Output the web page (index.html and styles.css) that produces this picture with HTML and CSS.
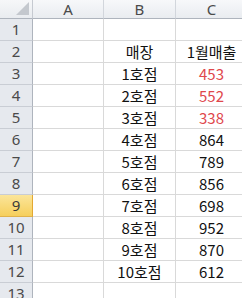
FILE: index.html
```html
<!DOCTYPE html>
<html>
<head>
<meta charset="utf-8">
<link rel="stylesheet" href="styles.css">
</head>
<body>
<div class="sheet">
  <div class="corner"><span class="tri"></span></div>
  <div class="colhead">A</div>
  <div class="colhead">B</div>
  <div class="colhead">C</div>

  <div class="rowhead">1</div><div class="cell"></div><div class="cell"></div><div class="cell"></div>
  <div class="rowhead">2</div><div class="cell"></div><div class="cell">매장</div><div class="cell">1월매출</div>
  <div class="rowhead">3</div><div class="cell"></div><div class="cell">1호점</div><div class="cell red">453</div>
  <div class="rowhead">4</div><div class="cell"></div><div class="cell">2호점</div><div class="cell red">552</div>
  <div class="rowhead">5</div><div class="cell"></div><div class="cell">3호점</div><div class="cell red">338</div>
  <div class="rowhead">6</div><div class="cell"></div><div class="cell">4호점</div><div class="cell">864</div>
  <div class="rowhead">7</div><div class="cell"></div><div class="cell">5호점</div><div class="cell">789</div>
  <div class="rowhead">8</div><div class="cell"></div><div class="cell">6호점</div><div class="cell">856</div>
  <div class="rowhead sel">9</div><div class="cell"></div><div class="cell">7호점</div><div class="cell">698</div>
  <div class="rowhead">10</div><div class="cell"></div><div class="cell">8호점</div><div class="cell">952</div>
  <div class="rowhead">11</div><div class="cell"></div><div class="cell">9호점</div><div class="cell">870</div>
  <div class="rowhead">12</div><div class="cell"></div><div class="cell">10호점</div><div class="cell">612</div>
  <div class="rowhead">13</div><div class="cell"></div><div class="cell"></div><div class="cell"></div>
</div>
</body>
</html>
```
FILE: styles.css
```css
html, body {
  margin: 0;
  padding: 0;
  background: #ffffff;
  overflow: hidden;
}
.sheet {
  display: grid;
  grid-template-columns: 33px 71px 72px 72px;
  grid-template-rows: 19px repeat(13, 22px);
  font-family: "Noto Sans CJK KR", "Noto Sans", sans-serif;
  font-size: 15px;
  color: #111;
  width: 248px;
}
.corner {
  position: relative;
  background: linear-gradient(#f6f7f9, #e9ecf0);
  border-right: 1px solid #c6cad1;
  border-bottom: 1px solid #aeb4bd;
}
.tri {
  position: absolute;
  right: 3px;
  bottom: 3px;
  width: 0;
  height: 0;
  border-left: 13px solid transparent;
  border-bottom: 13px solid #c4c8ce;
}
.colhead {
  background: linear-gradient(#f7f8fa, #e9ecf0);
  border-right: 1px solid #d2d6dc;
  border-bottom: 1px solid #aeb4bd;
  color: #4a4a4a;
  display: flex;
  align-items: center;
  justify-content: center;
  font-family: "Noto Sans", sans-serif;
  font-size: 15px;
  line-height: 1;
}
.rowhead {
  background: #e6e9ee;
  border-right: 1px solid #aeb4bd;
  border-bottom: 1px solid #c9cdd4;
  color: #4a4a4a;
  display: flex;
  align-items: center;
  justify-content: center;
  font-family: "Noto Sans", sans-serif;
  font-size: 15px;
  line-height: 1;
}
.rowhead.sel {
  background: linear-gradient(#fbe59a, #f6cf5c);
  border-right: 1px solid #e3a832;
  border-bottom: 1px solid #e0b24a;
  color: #3a3a3a;
}
.cell {
  border-right: 1px solid #d9d9d9;
  border-bottom: 1px solid #d9d9d9;
  display: flex;
  align-items: center;
  justify-content: center;
  line-height: 1;
}
.red {
  color: #e0474c;
}
```
